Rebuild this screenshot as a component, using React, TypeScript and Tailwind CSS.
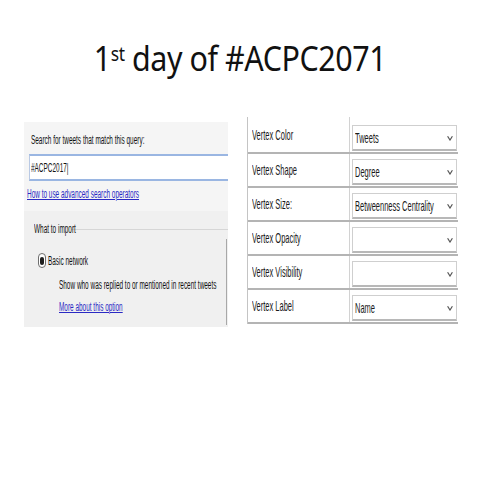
import type { ReactNode } from "react";

const VERTEX_ROWS = [
  { label: "Vertex Color", value: "Tweets" },
  { label: "Vertex Shape", value: "Degree" },
  { label: "Vertex Size:", value: "Betweenness Centrality" },
  { label: "Vertex Opacity", value: "" },
  { label: "Vertex Visibility", value: "" },
  { label: "Vertex Label", value: "Name" },
];

// the screenshots on the slide are squashed horizontally, so the text is too
function Squashed({ children, className, scale = 0.53 }: { children: ReactNode; className?: string; scale?: number }) {
  return (
    <span
      className={`inline-block origin-left whitespace-nowrap ${className ?? ""}`}
      style={{ transform: `scaleX(${scale})` }}
    >
      {children}
    </span>
  );
}

function Chevron() {
  return (
    <svg width="6" height="6" viewBox="0 0 6 6" aria-hidden="true" className="shrink-0">
      <path d="M0.6 1.2 L3 5 L5.4 1.2" fill="none" stroke="#555" strokeWidth="1.2" />
    </svg>
  );
}

function ImportPanel() {
  return (
    <div className="relative flex h-[205px] w-[204px] flex-col bg-[#f0f0f0] text-[12.5px] leading-[14px] text-[#111]">
      <div className="flex h-[89px] flex-col bg-[#f5f5f5]">
        <div className="pl-[7px] pt-[11px]">
          <Squashed scale={0.515}>Search for tweets that match this query:</Squashed>
        </div>
        <div className="ml-[5px] mt-[7px] flex h-[27px] items-center border-y-2 border-l border-y-[#9ab6e2] border-l-[#b9c9e4] bg-white pl-[1px]">
          <Squashed scale={0.515}>#ACPC2017|</Squashed>
        </div>
        <div className="pl-[3px] pt-[6px]">
          <Squashed scale={0.515} className="text-[#2a2ac4] underline">How to use advanced search operators</Squashed>
        </div>
      </div>
      <div className="mt-[11px] flex items-center pl-[10px]">
        <div className="w-[37px]">
          <Squashed scale={0.515}>What to import</Squashed>
        </div>
        <div className="h-px flex-1 bg-[#d6d6d6]" />
      </div>
      <div className="relative flex-1">
        <div className="absolute right-[1px] top-[3px] bottom-[2px] w-px bg-[#a8a8a8]" />
        <div className="flex items-center pl-[14px] pt-[17px]">
          <span className="flex h-[15px] w-[8px] shrink-0 items-center justify-center rounded-full border border-[#6e6e6e] bg-white">
            <span className="h-[8px] w-[4px] rounded-full bg-[#1e1e1e]" />
          </span>
          <span className="pl-[2px]">
            <Squashed scale={0.515}>Basic network</Squashed>
          </span>
        </div>
        <div className="pl-[35px] pt-[10px]">
          <Squashed scale={0.515}>Show who was replied to or mentioned in recent tweets</Squashed>
        </div>
        <div className="pl-[35px] pt-[8px]">
          <Squashed scale={0.515} className="text-[#2a2ac4] underline">More about this option</Squashed>
        </div>
      </div>
    </div>
  );
}

function VertexPanel() {
  return (
    <div className="flex w-[211px] flex-col border-l border-[#c4c4c4] bg-white text-[15px] leading-[16px] text-[#1a1a1a]">
      {VERTEX_ROWS.map((row, i) => (
        <div
          key={row.label}
          className={`flex border-b-2 border-[#b4b4b4] ${i === 0 ? "h-[37px]" : "h-[34px]"}`}
        >
          <div className="flex w-[102px] shrink-0 items-center overflow-visible border-r border-[#d2d2d2] pl-[4px]">
            <div className="w-0">
              <Squashed scale={0.5}>{row.label}</Squashed>
            </div>
          </div>
          <div className="flex min-w-0 flex-1 items-end pb-[1px] pl-[2px] pr-[1px]">
            <div className="flex h-[26px] w-full items-center border border-b-2 border-[#cfcfcf] border-b-[#b8b8b8] bg-white pl-[2px] pr-[3px]">
              <div className="min-w-0 flex-1">
                <div className="w-0">
                  <Squashed scale={0.5}>{row.value}</Squashed>
                </div>
              </div>
              <Chevron />
            </div>
          </div>
        </div>
      ))}
    </div>
  );
}

export default function App() {
  return (
    <div className="h-[480px] w-[480px] overflow-hidden bg-white font-['Liberation_Sans',Arial,sans-serif]">
      <h1
        className="pt-[34px] text-center font-['Noto_Sans',sans-serif] text-[35px] font-normal leading-[48px] tracking-[-0.5px] text-[#111]"
        style={{ transform: "scaleX(0.87)" }}
      >
        1<sup className="text-[20px] leading-none">st</sup> day of #ACPC2071
      </h1>
      <div className="mt-[38px] flex items-start">
        <div className="ml-[24px] mt-[2px]">
          <ImportPanel />
        </div>
        <div className="ml-[19px] mt-[-3px]">
          <VertexPanel />
        </div>
      </div>
    </div>
  );
}
